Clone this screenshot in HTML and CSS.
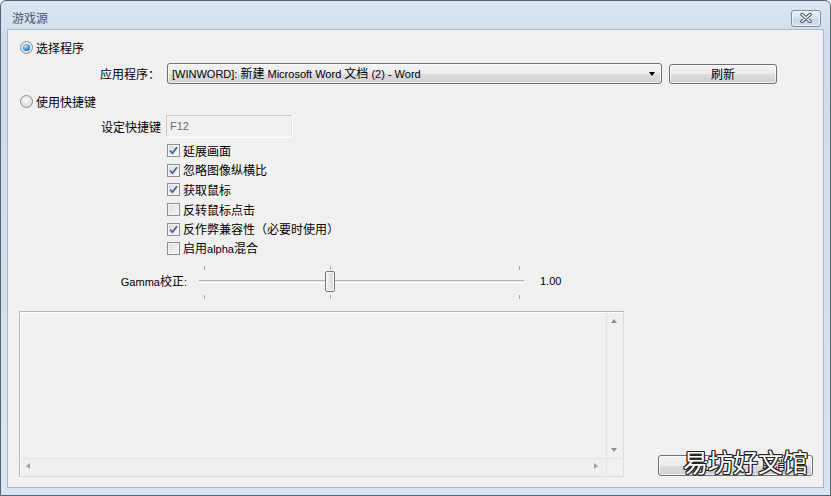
FILE: index.html
```html
<!DOCTYPE html>
<html lang="zh">
<head>
<meta charset="utf-8">
<title>游戏源</title>
<link rel="stylesheet" href="styles.css">
</head>
<body>
<div class="window">
  <div class="titlebar">
    <span class="title">游戏源</span>
    <span class="close">
      <svg width="12" height="10" viewBox="0 0 12 10">
        <path d="M2 1.5 L10 8.5 M10 1.5 L2 8.5" stroke="#3d4853" stroke-width="3.4" stroke-linecap="round"/>
        <path d="M2 1.5 L10 8.5 M10 1.5 L2 8.5" stroke="#ffffff" stroke-width="1.6" stroke-linecap="round"/>
      </svg>
    </span>
  </div>
  <div class="client">
    <div class="radio-row">
      <span class="radio on"></span><span>选择程序</span>
    </div>
    <div class="field-row app-row">
      <span class="field-label app-label">应用程序：</span>
      <div class="combo">
        <span class="combo-text"><span class="latin">[WINWORD]: </span>新建<span class="latin"> Microsoft Word </span>文档<span class="latin"> (2) - Word</span></span>
        <span class="combo-arrow"></span>
      </div>
      <div class="btn refresh">刷新</div>
    </div>
    <div class="radio-row radio2">
      <span class="radio"></span><span>使用快捷键</span>
    </div>
    <div class="field-row hotkey-row">
      <span class="field-label hotkey-label">设定快捷键</span>
      <div class="input"><span class="latin">F12</span></div>
    </div>
    <div class="checks">
      <div class="check-row"><span class="cb on"><svg width="11" height="11" viewBox="0 0 11 11"><path d="M2 5.5 L4.4 8.2 L9 2.2" fill="none" stroke="#3f5c8f" stroke-width="1.7"/></svg></span><span>延展画面</span></div>
      <div class="check-row"><span class="cb on"><svg width="11" height="11" viewBox="0 0 11 11"><path d="M2 5.5 L4.4 8.2 L9 2.2" fill="none" stroke="#3f5c8f" stroke-width="1.7"/></svg></span><span>忽略图像纵横比</span></div>
      <div class="check-row"><span class="cb on"><svg width="11" height="11" viewBox="0 0 11 11"><path d="M2 5.5 L4.4 8.2 L9 2.2" fill="none" stroke="#3f5c8f" stroke-width="1.7"/></svg></span><span>获取鼠标</span></div>
      <div class="check-row"><span class="cb"></span><span>反转鼠标点击</span></div>
      <div class="check-row"><span class="cb on"><svg width="11" height="11" viewBox="0 0 11 11"><path d="M2 5.5 L4.4 8.2 L9 2.2" fill="none" stroke="#3f5c8f" stroke-width="1.7"/></svg></span><span>反作弊兼容性（必要时使用）</span></div>
      <div class="check-row"><span class="cb"></span><span>启用<span class="latin">alpha</span>混合</span></div>
    </div>
    <div class="slider-row">
      <span class="slider-label"><span class="latin">Gamma</span>校正<span class="latin">:</span></span>
      <div class="slider">
        <span class="tick t-top" style="left:5px"></span>
        <span class="tick t-top" style="left:131px"></span>
        <span class="tick t-top" style="left:320px"></span>
        <span class="tick t-bot" style="left:5px"></span>
        <span class="tick t-bot" style="left:131px"></span>
        <span class="tick t-bot" style="left:320px"></span>
        <span class="track"></span>
        <span class="thumb"></span>
      </div>
      <span class="slider-value latin">1.00</span>
    </div>
    <div class="bottom">
      <div class="preview">
        <div class="preview-area"></div>
        <div class="vscroll">
          <span class="sbtn"><span class="arr up"></span></span>
          <span class="sbtn"><span class="arr down"></span></span>
        </div>
        <div class="hscroll">
          <span class="sbtn-h"><span class="arr left"></span></span>
          <span class="sbtn-h"><span class="arr right"></span></span>
        </div>
        <div class="corner"></div>
      </div>
      <div class="btn ok"><span>确定</span><span>取消</span></div>
    </div>
  </div>
  <div class="watermark">易坊好文馆</div>
</div>
</body>
</html>
```
FILE: styles.css
```css
* { box-sizing: border-box; }
html, body { margin: 0; padding: 0; }
body {
  width: 831px;
  height: 496px;
  overflow: hidden;
  background: #ffffff;
  font-family: "Noto Sans CJK SC", "Liberation Sans", sans-serif;
  font-size: 12px;
  color: #000;
}
.latin {
  font-family: "Liberation Sans", "Noto Sans CJK SC", sans-serif;
  font-size: 11px;
}
.window {
  position: relative;
  width: 831px;
  height: 496px;
  border: 1px solid #58626e;
  border-radius: 6px 6px 0 0;
  background: linear-gradient(#dbe6f3, #cddcee 40px, #d3e0f0 300px, #dbe5f2);
  display: flex;
  flex-direction: column;
}
.titlebar {
  height: 28px;
  flex: none;
  display: flex;
  align-items: center;
  justify-content: space-between;
  padding: 6px 9px 0 11px;
}
.title {
  color: #4a5869;
  font-size: 12px;
  line-height: 14px;
}
.close {
  width: 30px;
  height: 17px;
  border: 1px solid #7d8ea3;
  border-radius: 3px;
  background: linear-gradient(#e9f0f8, #d6e1ee 50%, #c9d6e6 51%, #d3deeb);
  box-shadow: inset 0 0 0 1px rgba(255,255,255,0.6);
  display: flex;
  align-items: center;
  justify-content: center;
}
.client {
  margin: 0 6px;
  height: 459px;
  flex: none;
  background: #f0f0f0;
  border: 1px solid #a9b7c8;
  padding: 11px 0 0 12px;
  display: flex;
  flex-direction: column;
}
.radio-row {
  display: flex;
  align-items: center;
  gap: 3px;
  height: 13px;
  line-height: 13px;
}
.radio2 { margin-top: 11px; }
.radio {
  width: 13px;
  height: 13px;
  border-radius: 50%;
  border: 1px solid #8b8d8f;
  background: radial-gradient(circle at 50% 40%, #fbfbfb, #e4e4e4 55%, #cfd0d1);
  display: flex;
  align-items: center;
  justify-content: center;
}
.radio.on::after {
  content: "";
  width: 7px;
  height: 7px;
  border-radius: 50%;
  background: radial-gradient(circle at 40% 35%, #c6ebff, #2f8ad6 55%, #0f4a8a);
}
.field-row {
  display: flex;
  align-items: center;
}
.app-row { margin-top: 9px; height: 21px; }
.field-label { text-align: right; flex: none; }
.app-label { width: 140px; margin-right: 7px; }
.combo {
  width: 495px;
  height: 21px;
  border: 1px solid #707070;
  border-radius: 3px;
  background: linear-gradient(#f3f3f3, #ebebeb 50%, #dddddd 51%, #d3d3d3);
  box-shadow: inset 0 0 0 1px rgba(255,255,255,0.7);
  display: flex;
  align-items: center;
  justify-content: space-between;
  padding: 0 6px 0 4px;
}
.combo-text { white-space: nowrap; line-height: 17px; }
.combo-arrow {
  width: 0;
  height: 0;
  border-left: 3.5px solid transparent;
  border-right: 3.5px solid transparent;
  border-top: 4px solid #000;
}
.btn {
  height: 20px;
  border: 1px solid #707070;
  border-radius: 3px;
  background: linear-gradient(#f2f2f2, #ebebeb 50%, #dddddd 51%, #cfcfcf);
  box-shadow: inset 0 0 0 1px rgba(255,255,255,0.75);
  display: flex;
  align-items: center;
  justify-content: center;
  line-height: 16px;
}
.refresh { width: 108px; margin-left: 7px; }
.hotkey-row { margin-top: 7px; height: 22px; }
.hotkey-label { width: 141px; margin-right: 5px; }
.input {
  width: 126px;
  height: 22px;
  background: #f0f0f0;
  border: 1px solid #cbcbcb;
  border-right-color: #e6e6e6;
  border-bottom-color: #f8f8f8;
  box-shadow: 0 1px 0 #ffffff, 1px 0 0 #ffffff;
  color: #6d6d6d;
  padding-left: 3px;
  display: flex;
  align-items: center;
}
.checks {
  margin-top: 4px;
  padding-left: 147px;
  display: flex;
  flex-direction: column;
}
.check-row {
  height: 19.6px;
  display: flex;
  align-items: center;
  gap: 3px;
  line-height: 16px;
}
.cb {
  width: 13px;
  height: 13px;
  border: 1px solid #8e8f8f;
  background: linear-gradient(135deg, #dcdcdc, #f6f6f6);
  box-shadow: inset 0 0 0 1px #f4f4f4;
  display: flex;
  align-items: center;
  justify-content: center;
  flex: none;
}
.slider-row {
  margin-top: 2.4px;
  height: 40px;
  display: flex;
  align-items: center;
}
.slider-label { width: 167px; text-align: right; margin-right: 12px; flex: none; }
.slider {
  position: relative;
  width: 325px;
  height: 40px;
  flex: none;
}
.tick {
  position: absolute;
  width: 1px;
  height: 4px;
  background: #a8a8a8;
}
.t-top { top: 5px; }
.t-bot { top: 34px; }
.track {
  position: absolute;
  left: 0;
  right: 0;
  top: 19px;
  height: 3px;
  background: #e6e6e6;
  border-top: 1px solid #b0b0b0;
  border-bottom: 1px solid #ffffff;
}
.thumb {
  position: absolute;
  left: 126px;
  top: 10px;
  width: 10px;
  height: 21px;
  border: 1px solid #787878;
  border-radius: 2px;
  background: linear-gradient(90deg, #f6f6f6, #e4e4e4 50%, #d6d6d6);
  box-shadow: inset 0 0 0 1px #fbfbfb;
}
.slider-value { margin-left: 16px; }
.bottom {
  margin-top: 10px;
  margin-left: -1px;
  display: flex;
  align-items: flex-end;
}
.preview {
  width: 605px;
  height: 166px;
  border: 1px solid #b4b4ba;
  border-right-color: #dcdce0;
  border-bottom-color: #dcdce0;
  box-shadow: inset 1px 1px 0 #ffffff;
  padding: 1px 2px 2px 1px;
  display: grid;
  grid-template-columns: 1fr 15px;
  grid-template-rows: 1fr 16px;
  background: #f0f0f0;
}
.preview-area { background: #f1f1f1; }
.vscroll {
  background: #f0f0f0;
  border-left: 1px solid #e2e2e2;
  display: flex;
  flex-direction: column;
  justify-content: space-between;
}
.hscroll {
  background: #efefef;
  border-top: 1px solid #e2e2e2;
  display: flex;
  justify-content: space-between;
  padding-right: 4px;
}
.corner { background: #f0f0f0; border-left: 1px solid #e2e2e2; border-top: 1px solid #e2e2e2; }
.sbtn {
  height: 16px;
  display: flex;
  align-items: center;
  justify-content: center;
}
.sbtn-h {
  width: 13px;
  display: flex;
  align-items: center;
  justify-content: center;
}
.arr { width: 0; height: 0; }
.arr.up { border-left: 3.5px solid transparent; border-right: 3.5px solid transparent; border-bottom: 4px solid #8e8e8e; }
.arr.down { border-left: 3.5px solid transparent; border-right: 3.5px solid transparent; border-top: 4px solid #8e8e8e; }
.arr.left { border-top: 3.5px solid transparent; border-bottom: 3.5px solid transparent; border-right: 4px solid #a0a0a0; }
.arr.right { border-top: 3.5px solid transparent; border-bottom: 3.5px solid transparent; border-left: 4px solid #a0a0a0; }
.ok {
  width: 155px;
  height: 21px;
  margin-left: 34px;
  margin-bottom: 1px;
  justify-content: space-around;
}
.watermark {
  position: absolute;
  left: 682px;
  top: 443px;
  font-family: "Noto Sans CJK SC", sans-serif;
  font-size: 25px;
  line-height: 34px;
  color: #ffffff;
  letter-spacing: 0;
  text-shadow: 1px 0 0 #222, -1px 0 0 #222, 0 1px 0 #222, 0 -1px 0 #222,
    1px 1px 0 #222, -1px -1px 0 #222, 1px -1px 0 #222, -1px 1px 0 #222;
}
```
